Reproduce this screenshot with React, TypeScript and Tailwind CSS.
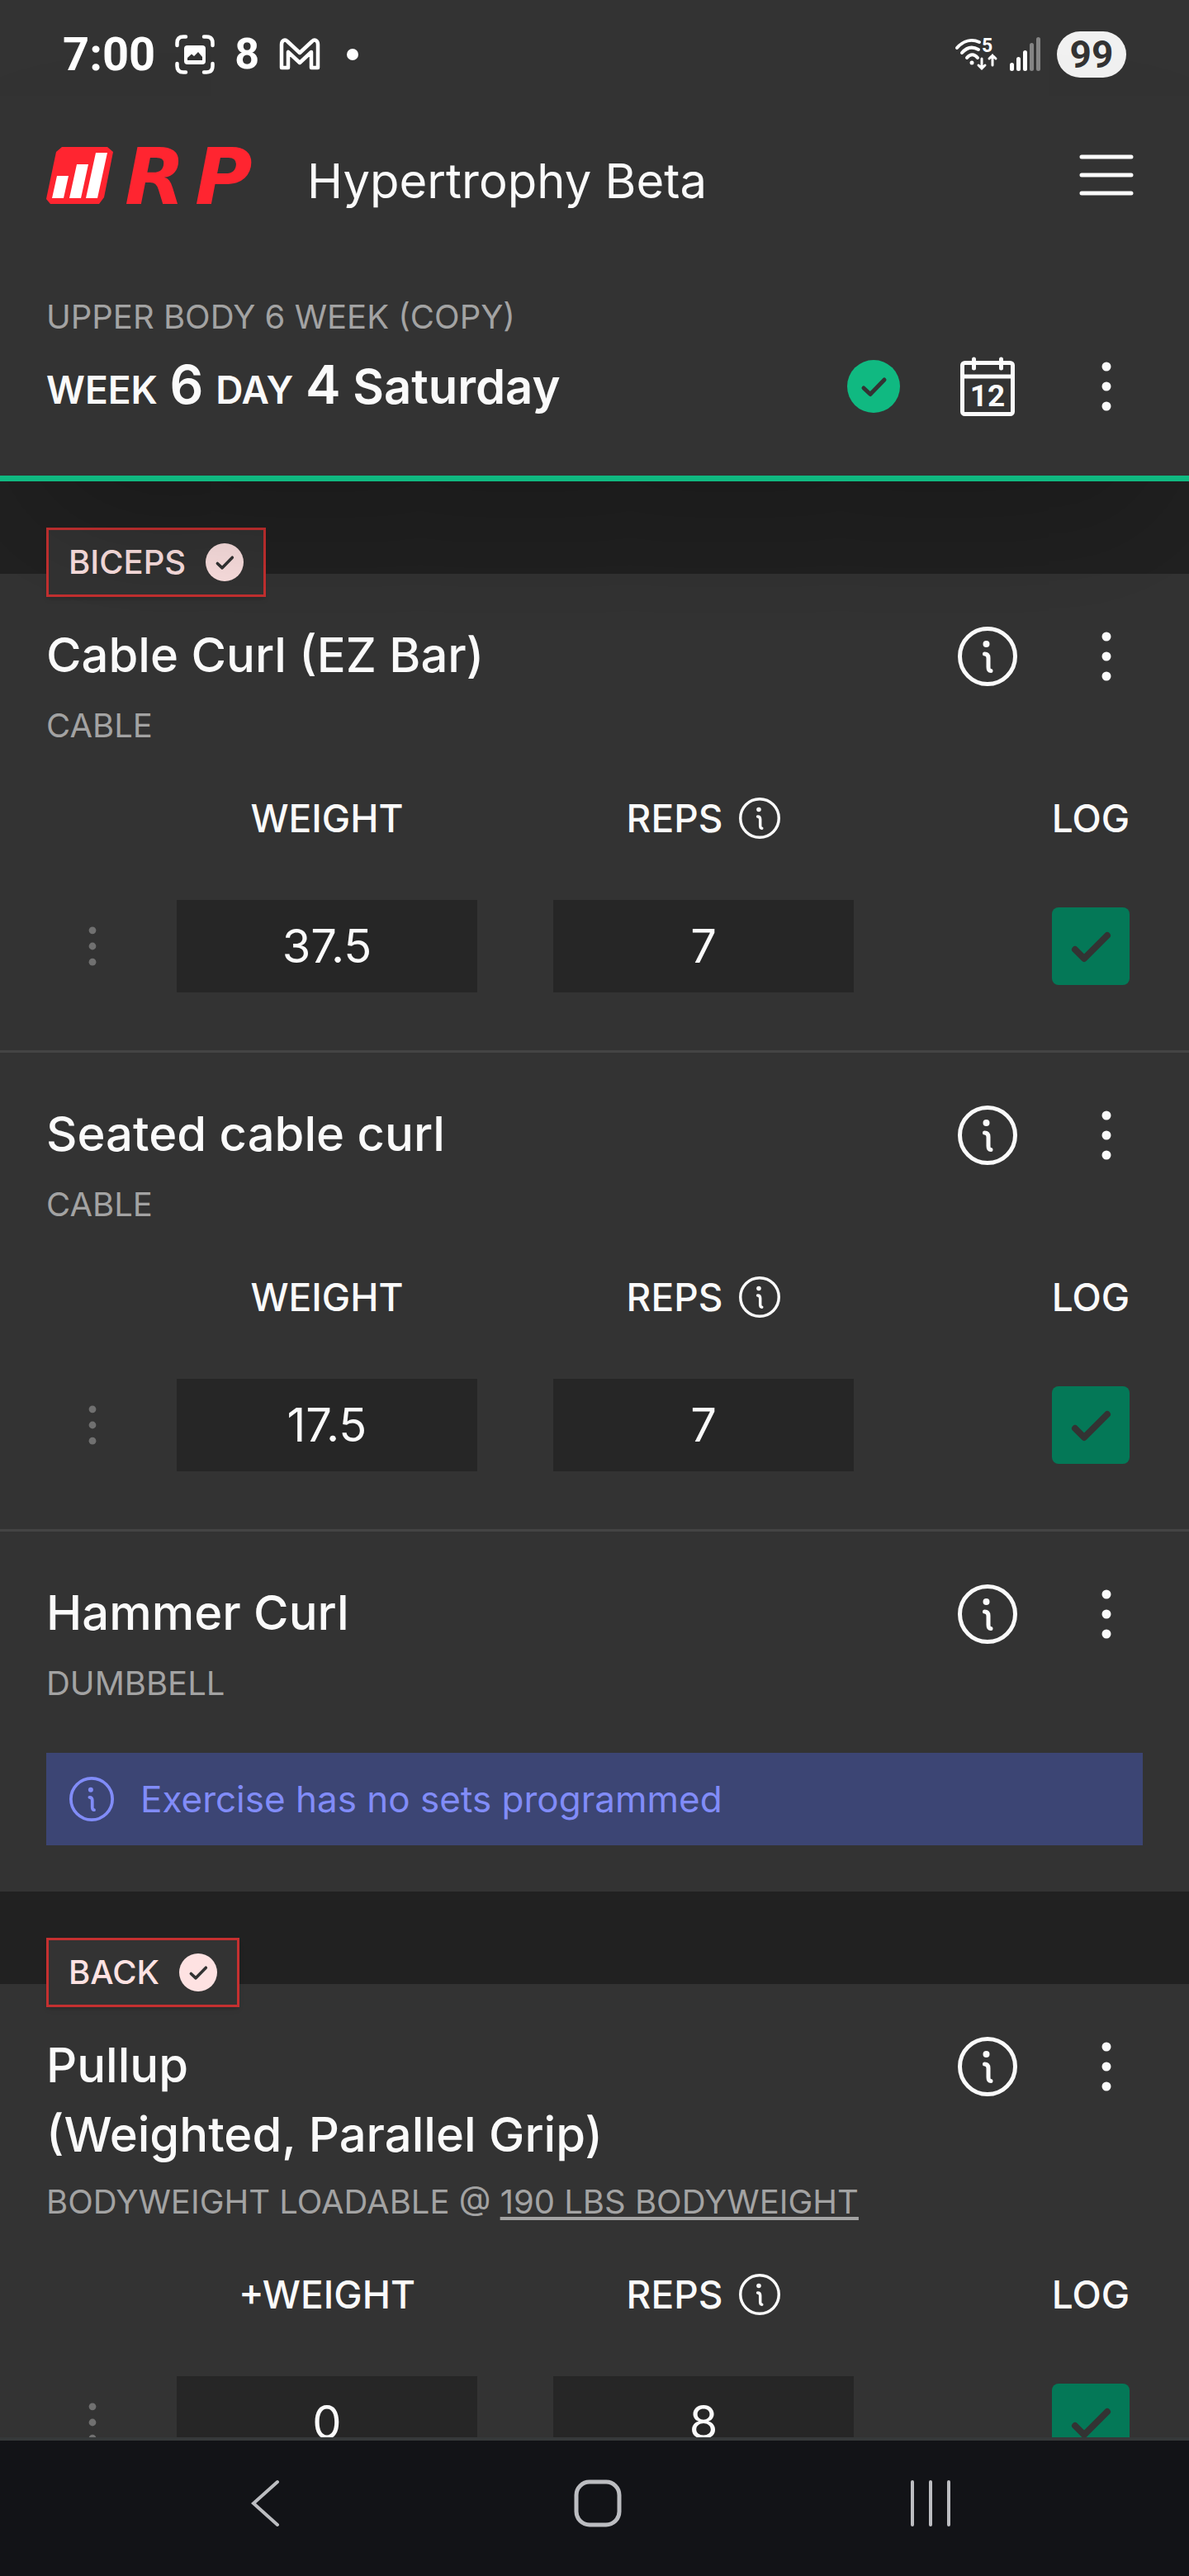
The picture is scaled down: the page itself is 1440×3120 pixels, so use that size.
import React from "react";

type Exercise = {
  name: string[];
  equipment: string;
  bodyweight?: string;
  weightLabel?: string;
  sets: { weight: string; reps: string }[];
};

type MuscleGroup = {
  label: string;
  exercises: Exercise[];
};

const groups: MuscleGroup[] = [
  {
    label: "BICEPS",
    exercises: [
      {
        name: ["Cable Curl (EZ Bar)"],
        equipment: "CABLE",
        sets: [{ weight: "37.5", reps: "7" }],
      },
      {
        name: ["Seated cable curl"],
        equipment: "CABLE",
        sets: [{ weight: "17.5", reps: "7" }],
      },
      { name: ["Hammer Curl"], equipment: "DUMBBELL", sets: [] },
    ],
  },
  {
    label: "BACK",
    exercises: [
      {
        name: ["Pullup", "(Weighted, Parallel Grip)"],
        equipment: "BODYWEIGHT LOADABLE",
        bodyweight: "190 LBS BODYWEIGHT",
        weightLabel: "+WEIGHT",
        sets: [{ weight: "0", reps: "8" }],
      },
    ],
  },
];

const InfoIcon = ({ className }: { className: string }) => (
  <svg viewBox="0 0 72 72" fill="none" className={className} aria-hidden="true">
    <circle cx="36" cy="36" r="33.5" stroke="currentColor" strokeWidth="5" />
    <circle cx="34.5" cy="21" r="4" fill="currentColor" />
    <path
      d="M32.5 33C36 33 37 35 37 38V49C37 52 38 53.5 40 53.5"
      stroke="currentColor"
      strokeWidth="5"
      strokeLinecap="round"
    />
  </svg>
);

const CheckCircle = ({ className }: { className: string }) => (
  <svg viewBox="0 0 64 64" fill="none" className={className} aria-hidden="true">
    <circle cx="32" cy="32" r="32" fill="currentColor" />
    <path
      d="M20 34L28 41.5L45 24"
      stroke="#333333"
      strokeWidth="5"
      strokeLinecap="round"
      strokeLinejoin="round"
    />
  </svg>
);

const DotsIcon = ({ className }: { className: string }) => (
  <svg viewBox="0 0 12 60" fill="currentColor" className={className} aria-hidden="true">
    <circle cx="6" cy="6" r="5.5" />
    <circle cx="6" cy="30" r="5.5" />
    <circle cx="6" cy="54" r="5.5" />
  </svg>
);

const StatusBar = () => (
  <div className="flex h-[116px] shrink-0 items-center justify-between px-[76px] pt-4 font-[Roboto,sans-serif] text-white">
    <div className="flex items-center gap-6">
      <span className="text-[56px] leading-none font-bold">7:00</span>
      {/* Captura de pantalla */}
      <svg viewBox="0 0 48 48" fill="none" className="size-12">
        <path
          d="M2.5 13V10Q2.5 2.5 10 2.5H13M35 2.5H38Q45.5 2.5 45.5 10V13M45.5 35V38Q45.5 45.5 38 45.5H35M13 45.5H10Q2.5 45.5 2.5 38V35"
          stroke="currentColor"
          strokeWidth="4.5"
          strokeLinecap="round"
        />
        <rect x="11" y="13" width="26" height="23" rx="4" fill="currentColor" />
        <path d="M15 31V28L20 23.5L23 26L28 21L33 27V31Z" fill="#333333" />
      </svg>
      <span className="text-[52px] leading-none font-bold">8</span>
      <svg viewBox="0 0 50 40" fill="none" className="h-10 w-[50px]">
        <path
          d="M3 8C3 3 7 1 10 4L25 18L40 4C43 1 47 3 47 8V36H39V17L25 30L11 17V36H3Z"
          stroke="currentColor"
          strokeWidth="4.5"
          strokeLinejoin="round"
        />
      </svg>
      <span className="mx-2 size-3.5 rounded-full bg-white" />
    </div>

    <div className="flex items-center">
      <svg viewBox="0 0 54 42" fill="none" className="mr-3 h-[42px] w-[54px] overflow-visible">
        <g stroke="currentColor" strokeLinecap="round">
          <path d="M3 13C11 4 21 2 30 6" strokeWidth="4" />
          <path d="M9 19C15 12 22 11 29 15" strokeWidth="4" />
          <path d="M15 25C19 20 24 20 28 25" strokeWidth="4" />
          <path d="M33 26V38M29 34L33 38L37 34M46 34V22M42 26L46 22L50 26" strokeWidth="3" />
        </g>
        <circle cx="21" cy="31" r="2.5" fill="currentColor" />
        <text x="33" y="18" fontSize="23" fontWeight="700" fill="currentColor">
          5
        </text>
      </svg>
      <svg viewBox="0 0 38 42" className="mr-5 h-[42px] w-[38px]" fill="currentColor">
        <rect x="1" y="31" width="5" height="10" rx="2.5" />
        <rect x="9" y="24" width="5" height="17" rx="2.5" />
        <rect x="17" y="16" width="5" height="25" rx="2.5" />
        <rect x="25" y="7" width="5" height="34" rx="2.5" opacity="0.4" />
        <rect x="33" y="0" width="5" height="41" rx="2.5" opacity="0.4" />
      </svg>
      <span className="flex h-14 w-[84px] items-center justify-center rounded-full bg-[#f1f1f1] text-[46px] leading-none font-bold text-[#333333]">
        99
      </span>
    </div>
  </div>
);

const Logo = () => (
  <svg viewBox="0 0 260 69" className="h-[69px] w-[260px] overflow-visible" role="img" aria-label="RP">
    <path d="M19 0H74L81 6L70 61L64 69H5L0 63L12 6Z" fill="#ff2530" />
    <path d="M13 35H27L21 62H7ZM37 21H51L42 62H28ZM60 7H74L62 62H48Z" fill="#ffffff" />
    <g fontFamily="DejaVu Sans" fontSize="95" fontWeight="700" fontStyle="italic" fill="#ff2530">
      <text x="95" y="69">R</text>
      <text x="180" y="69">P</text>
    </g>
  </svg>
);

const AppHeader = () => (
  <div className="flex h-48 items-center justify-between px-14">
    <div className="flex items-end gap-14">
      <Logo />
      <span className="text-[58px] leading-14">Hypertrophy Beta</span>
    </div>
    <button type="button" aria-label="Menu" className="flex size-[88px] items-center justify-center">
      <svg viewBox="0 0 66 50" className="h-[50px] w-[66px]" fill="none">
        <path
          d="M3 3H63M3 25H63M3 47H63"
          stroke="currentColor"
          strokeWidth="5"
          strokeLinecap="round"
        />
      </svg>
    </button>
  </div>
);

const WorkoutHeader = () => (
  <div className="border-b-[7px] border-[#10b981] px-14 pt-12 pb-16">
    <p className="text-[40px] leading-14 text-[#a3a3a3]">UPPER BODY 6 WEEK (COPY)</p>
    <div className="mt-3 flex h-[88px] items-center justify-between">
      <h1 className="text-[58px] leading-[88px] font-semibold">
        <span className="text-[46px] leading-none">WEEK</span>{" "}
        <span className="text-[64px] leading-none">6</span>{" "}
        <span className="text-[46px] leading-none">DAY</span>{" "}
        <span className="text-[64px] leading-none">4</span> Saturday
      </h1>
      <div className="flex items-center gap-14">
        <span className="flex w-[76px] justify-center text-[#10b981]">
          <CheckCircle className="size-16" />
        </span>
        <button
          type="button"
          aria-label="Calendar"
          className="flex size-[88px] items-center justify-center"
        >
          <svg viewBox="0 0 66 72" className="h-[72px] w-[66px]" fill="none">
            <g stroke="currentColor" strokeWidth="5" strokeLinecap="round">
              <rect x="2.5" y="7.5" width="61" height="62" rx="3" />
              <path d="M3 24H63M16.5 3V14M49.5 3V14" />
            </g>
            <text
              x="33"
              y="60"
              textAnchor="middle"
              fontSize="37"
              fontWeight="700"
              fontFamily="Roboto"
              fill="currentColor"
            >
              12
            </text>
          </svg>
        </button>
        <button
          type="button"
          aria-label="Workout options"
          className="flex size-[88px] items-center justify-center"
        >
          <DotsIcon className="h-[60px] w-3" />
        </button>
      </div>
    </div>
  </div>
);

const SetTable = ({ exercise }: { exercise: Exercise }) => (
  <table className="mt-12 w-full table-fixed border-collapse">
    <thead>
      <tr className="h-[71px] text-[46px] leading-14">
        <th className="w-[168px]" aria-label="Set options" />
        <th className="font-medium">{exercise.weightLabel ?? "WEIGHT"}</th>
        <th className="font-medium">
          <span className="flex items-center justify-center gap-5">
            REPS
            <button type="button" aria-label="About reps">
              <InfoIcon className="size-[50px]" />
            </button>
          </span>
        </th>
        <th className="w-1/4 pr-[72px] font-medium">
          <span className="ml-auto flex w-[94px] justify-center">LOG</span>
        </th>
      </tr>
    </thead>
    <tbody>
      {exercise.sets.map((set, index) => (
        <tr key={index}>
          <td className="pt-16 pl-14">
            <button
              type="button"
              aria-label="Set menu"
              className="flex h-28 w-full items-center justify-center text-[#707070]"
            >
              <DotsIcon className="h-12 w-3" />
            </button>
          </td>
          <td className="px-[46px] pt-16">
            <input
              type="text"
              inputMode="decimal"
              aria-label={`${exercise.name[0]} weight`}
              defaultValue={set.weight}
              className="block h-28 w-full bg-[#262626] text-center text-[56px] focus:outline-none"
            />
          </td>
          <td className="px-[46px] pt-16">
            <input
              type="text"
              inputMode="numeric"
              aria-label={`${exercise.name[0]} reps`}
              defaultValue={set.reps}
              className="block h-28 w-full bg-[#262626] text-center text-[56px] focus:outline-none"
            />
          </td>
          <td className="pt-16 pr-[72px]">
            <label className="relative ml-auto block size-[94px]">
              <input
                type="checkbox"
                defaultChecked
                aria-label="Log set"
                className="block size-full appearance-none rounded-lg bg-[#4b4b4b] checked:bg-[#047857]"
              />
              <svg
                viewBox="0 0 94 94"
                fill="none"
                className="pointer-events-none absolute inset-0"
                aria-hidden="true"
              >
                <path
                  d="M28 51L39 62L67 34"
                  stroke="#333333"
                  strokeWidth="8"
                  strokeLinecap="round"
                  strokeLinejoin="round"
                />
              </svg>
            </label>
          </td>
        </tr>
      ))}
    </tbody>
  </table>
);

const ExerciseCard = ({ exercise }: { exercise: Exercise }) => {
  const hasSets = exercise.sets.length > 0;

  return (
    <li
      className={
        hasSets
          ? "border-b-[3px] border-[#444444] bg-[#333333] pt-14 pb-[70px]"
          : "bg-[#333333] pt-14 pb-14"
      }
    >
      <div className="flex items-start justify-between px-14">
        <h2 className="text-[58px] leading-[84px] font-medium">
          {exercise.name.map((line) => (
            <span key={line} className="block">
              {line}
            </span>
          ))}
        </h2>
        <div className="flex gap-14">
          <button
            type="button"
            aria-label="Exercise info"
            className="flex size-[88px] items-center justify-center"
          >
            <InfoIcon className="size-[72px]" />
          </button>
          <button
            type="button"
            aria-label="Exercise options"
            className="flex size-[88px] items-center justify-center"
          >
            <DotsIcon className="h-[60px] w-3" />
          </button>
        </div>
      </div>
      <p className="px-14 pt-3 text-[40px] leading-14 text-[#a3a3a3]">
        {exercise.equipment}
        {exercise.bodyweight && (
          <>
            {" @ "}
            <a href="#bodyweight" className="underline underline-offset-4">
              {exercise.bodyweight}
            </a>
          </>
        )}
      </p>

      {hasSets ? (
        <SetTable exercise={exercise} />
      ) : (
        <div className="mx-14 mt-14 flex h-28 items-center gap-8 bg-[#3c4574] px-7 text-[#818cf8]">
          <InfoIcon className="size-[54px]" />
          <span className="text-[44px] leading-14">Exercise has no sets programmed</span>
        </div>
      )}
    </li>
  );
};

const NavBar = () => (
  <nav className="grid h-[168px] shrink-0 grid-cols-3 items-center border-t-4 border-[#36393a] bg-[#121317] pr-28 pb-3 pl-30 text-[#bcbdc1]">
    <button type="button" aria-label="Back" className="flex justify-center">
      <svg viewBox="0 0 56 60" fill="none" className="h-15 w-14">
        <path d="M43 4L14 30L43 56" stroke="currentColor" strokeWidth="4" strokeLinecap="round" />
      </svg>
    </button>
    <button type="button" aria-label="Home" className="flex justify-center">
      <svg viewBox="0 0 60 60" fill="none" className="size-15">
        <rect x="4" y="4" width="52" height="52" rx="16" stroke="currentColor" strokeWidth="5" />
      </svg>
    </button>
    <button type="button" aria-label="Recent apps" className="flex justify-center">
      <svg viewBox="0 0 60 60" fill="none" className="size-15">
        <path
          d="M8 4V56M30 4V56M52 4V56"
          stroke="currentColor"
          strokeWidth="4"
          strokeLinecap="round"
        />
      </svg>
    </button>
  </nav>
);

export default function App() {
  return (
    <div className="flex h-screen flex-col bg-[#333333] font-[Inter,sans-serif] text-[#fafafa]">
      <StatusBar />
      <header className="relative z-20 shrink-0 bg-[#333333] shadow-[0_88px_175px_-42px_rgba(0,0,0,0.25)]">
        <AppHeader />
        <WorkoutHeader />
      </header>

      <main className="min-h-0 flex-1 overflow-hidden">
        {groups.map((group) => (
          <section key={group.label}>
            <div className="h-28 bg-[#212121] px-14 pt-14">
              {/* La etiqueta se monta sobre la primera tarjeta */}
              <div className="relative z-10 flex h-[84px] w-fit items-center gap-6 border-[3px] border-[#c53030] bg-[#333333] px-6 text-[#fee2e2] shadow-md">
                <span className="text-[40px] leading-14 font-medium">{group.label}</span>
                <CheckCircle className="size-[46px]" />
              </div>
            </div>
            <ul>
              {group.exercises.map((exercise) => (
                <ExerciseCard key={exercise.name[0]} exercise={exercise} />
              ))}
            </ul>
          </section>
        ))}
      </main>

      <NavBar />
    </div>
  );
}
